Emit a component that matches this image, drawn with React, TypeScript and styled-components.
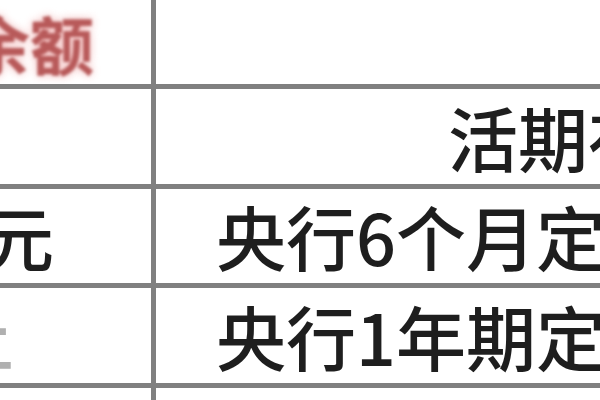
import React from 'react';
import styled, { createGlobalStyle } from 'styled-components';

const GlobalStyle = createGlobalStyle`
  html, body {
    margin: 0;
    padding: 0;
    background: #ffffff;
  }
`;

interface Row {
  label: string;
  labelShift: number;
  labelTone?: 'stamp' | 'faint' | 'ink';
  value: string;
  valueIndent: number;
  height: number;
}

const rows: Row[] = [
  { label: '余额', labelShift: -34, labelTone: 'stamp', value: '', valueIndent: 0, height: 84 },
  { label: '', labelShift: 0, value: '活期存款', valueIndent: 292, height: 95 },
  { label: '元', labelShift: -16, labelTone: 'ink', value: '央行6个月定期', valueIndent: 60, height: 94 },
  { label: '上', labelShift: -56, labelTone: 'faint', value: '央行1年期定期', valueIndent: 60, height: 95 },
  { label: '', labelShift: 0, value: '', valueIndent: 0, height: 20 },
];

const Sheet = styled.div`
  width: 600px;
  height: 400px;
  overflow: hidden;
  display: grid;
  grid-template-columns: 151px 1fr;
  column-gap: 5px;
  row-gap: 5px;
  background: #808080;
  align-content: start;
`;

const Cell = styled.div<{ $h: number }>`
  height: ${(p) => p.$h}px;
  background: #ffffff;
  overflow: hidden;
  display: flex;
  align-items: center;
  white-space: nowrap;
  font-family: 'Noto Sans CJK SC', 'DejaVu Sans', sans-serif;
  line-height: 1;
`;

const Label = styled.span<{ $shift: number; $tone: string }>`
  margin-left: ${(p) => p.$shift}px;
  font-size: ${(p) => (p.$tone === 'stamp' ? 64 : 70)}px;
  font-weight: ${(p) => (p.$tone === 'stamp' ? 700 : 500)};
  color: ${(p) =>
    p.$tone === 'stamp' ? '#b85a5a' : p.$tone === 'faint' ? '#b0b0b0' : '#1e1e1e'};
  text-shadow: ${(p) => (p.$tone === 'stamp' ? '0 0 8px #f1b4b4' : 'none')};
  filter: blur(${(p) => (p.$tone === 'stamp' ? 1.4 : 0.7)}px);
`;

const Value = styled.span<{ $indent: number }>`
  margin-left: ${(p) => p.$indent}px;
  font-size: 70px;
  font-weight: 500;
  color: #1e1e1e;
  filter: blur(0.6px);
`;

const App: React.FC = () => {
  return (
    <>
      <GlobalStyle />
      <Sheet>
        {rows.map((row, i) => (
          <React.Fragment key={i}>
            <Cell $h={row.height}>
              {row.label && (
                <Label $shift={row.labelShift} $tone={row.labelTone ?? 'ink'}>
                  {row.label}
                </Label>
              )}
            </Cell>
            <Cell $h={row.height}>
              {row.value && <Value $indent={row.valueIndent}>{row.value}</Value>}
            </Cell>
          </React.Fragment>
        ))}
      </Sheet>
    </>
  );
};

export default App;
